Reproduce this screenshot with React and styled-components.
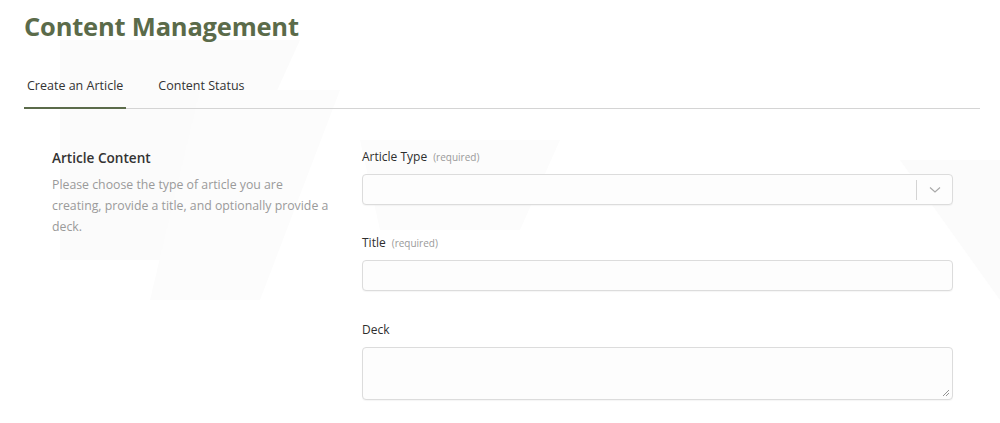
import React from 'react'
import styled, { createGlobalStyle } from 'styled-components'

const Global = createGlobalStyle`
  html, body { margin: 0; padding: 0; background: #ffffff; }
  body { font-family: 'Open Sans', 'Liberation Sans', sans-serif; }
  * { box-sizing: border-box; }
`

const Page = styled.div`
  position: relative;
  width: 1000px;
  height: 423px;
  overflow: hidden;
  padding: 8px 20px 0 24px;
`

const Watermark = styled.svg`
  position: absolute;
  left: 0;
  top: 0;
  width: 1000px;
  height: 423px;
  pointer-events: none;
  z-index: 0;
`

const Content = styled.div`
  position: relative;
  z-index: 1;
`

const Heading = styled.h1`
  margin: 0;
  font-size: 25.5px;
  font-weight: 700;
  color: #5b6b4a;
  line-height: 36px;
  letter-spacing: -0.2px;
`

const Tabs = styled.div`
  display: flex;
  margin-top: 33px;
  border-bottom: 1px solid #d4d4d4;
`

const Tab = styled.div`
  padding: 0 3px 12px;
  margin-right: 29px;
  font-size: 12.5px;
  color: #333;
  line-height: 18px;
  border-bottom: 2px solid ${p => (p.$active ? '#5b6b4a' : 'transparent')};
  margin-bottom: -1px;
`

const Section = styled.div`
  display: flex;
  padding: 40px 0 0 28px;
`

const Intro = styled.div`
  width: 310px;
  padding-right: 30px;
`

const IntroTitle = styled.div`
  font-size: 13.6px;
  font-weight: 600;
  color: #333;
  line-height: 18px;
`

const IntroText = styled.p`
  margin: 7px 0 0;
  font-size: 12.3px;
  color: #9a9a9a;
  line-height: 21px;
`

const Fields = styled.div`
  flex: 1;
  max-width: 591px;
  display: flex;
  flex-direction: column;
`

const Field = styled.div`
  margin-bottom: ${p => p.$gap || '30px'};
`

const Label = styled.div`
  font-size: 12px;
  font-weight: 500;
  color: #2e2e2e;
  line-height: 16px;
  margin-bottom: 9px;
`

const Hint = styled.span`
  font-size: 10px;
  font-weight: 400;
  color: #9a9a9a;
  margin-left: 6px;
`

const Box = styled.div`
  height: ${p => p.$h || '31px'};
  border: 1px solid #dcdcdc;
  border-radius: 4px;
  background: #fdfdfd;
  box-shadow: 0 1px 1px rgba(0, 0, 0, 0.04);
  display: flex;
  align-items: center;
  position: relative;
`

const Select = styled(Box)`
  justify-content: flex-end;
`

const Divider = styled.div`
  width: 1px;
  height: 20px;
  background: #d4d4d4;
`

const Chevron = styled.div`
  width: 35px;
  display: flex;
  justify-content: center;
  color: #999;
`

const Grip = styled.svg`
  position: absolute;
  right: 2px;
  bottom: 2px;
`

export default function App() {
  return (
    <Page>
      <Global />
      <Watermark viewBox="0 0 1000 423">
        <polygon points="60,40 300,40 200,260 60,260" fill="#fbfbfb" />
        <polygon points="200,90 340,90 260,300 150,300" fill="#fcfcfc" />
        <polygon points="360,140 560,140 520,230 380,230" fill="#fcfcfc" />
        <polygon points="900,160 1000,160 1000,300" fill="#fbfbfb" />
      </Watermark>
      <Content>
        <Heading>Content Management</Heading>
        <Tabs>
          <Tab $active>Create an Article</Tab>
          <Tab>Content Status</Tab>
        </Tabs>
        <Section>
          <Intro>
            <IntroTitle>Article Content</IntroTitle>
            <IntroText>
              Please choose the type of article you are creating, provide a title, and optionally provide a deck.
            </IntroText>
          </Intro>
          <Fields>
            <Field>
              <Label>
                Article Type<Hint>(required)</Hint>
              </Label>
              <Select>
                <Divider />
                <Chevron>
                  <svg width="12" height="8" viewBox="0 0 12 8">
                    <path d="M1 1.5 L6 6 L11 1.5" fill="none" stroke="#a8a8a8" strokeWidth="1.1" />
                  </svg>
                </Chevron>
              </Select>
            </Field>
            <Field $gap="31px">
              <Label>
                Title<Hint>(required)</Hint>
              </Label>
              <Box />
            </Field>
            <Field>
              <Label>Deck</Label>
              <Box $h="53px">
                <Grip width="8" height="8" viewBox="0 0 8 8">
                  <path d="M7 1 L1 7 M7 4 L4 7" stroke="#888" strokeWidth="0.9" />
                </Grip>
              </Box>
            </Field>
          </Fields>
        </Section>
      </Content>
    </Page>
  )
}
